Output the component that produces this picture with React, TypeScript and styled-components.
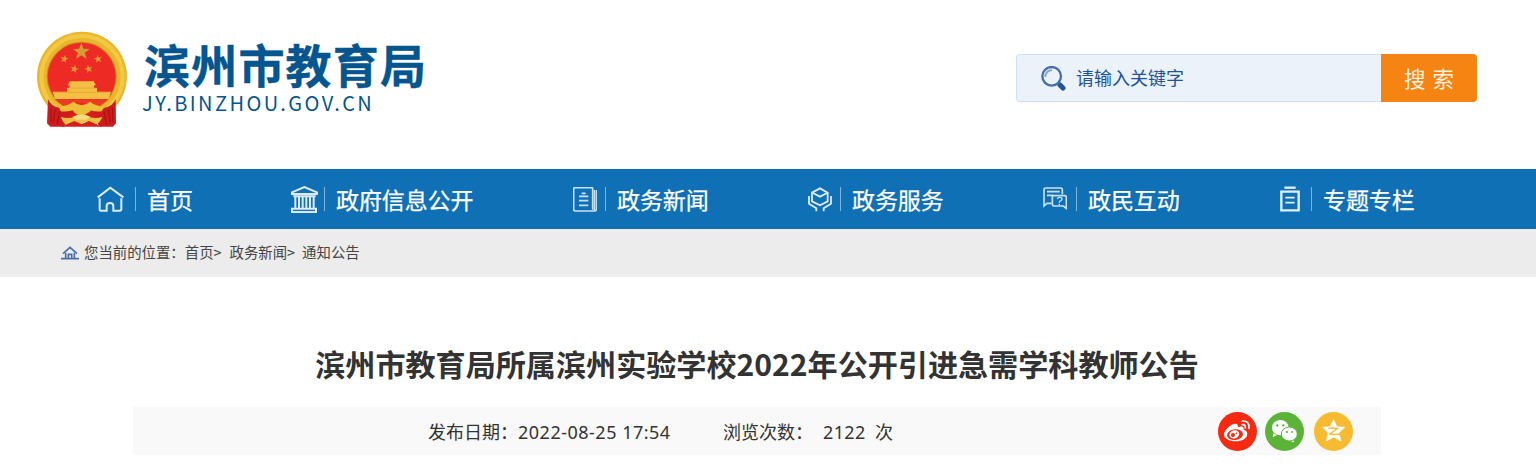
import * as React from 'react'
import styled, { createGlobalStyle } from 'styled-components'

const GlobalStyle = createGlobalStyle`
    body {
        margin: 0;
        background: #fff;
        color: #333;
        font-family: 'Noto Sans CJK SC', 'Noto Sans', sans-serif;
    }
`

const Page = styled.div`
    width: 1536px;
    height: 472px;
    overflow: hidden;
`

const Header = styled.header`
    height: 169px;
    box-sizing: border-box;
    padding: 30px 59px 0 36px;
    display: flex;
    justify-content: space-between;
    align-items: flex-start;
`

const Brand = styled.div`
    display: flex;
    gap: 14px;
`

const BrandText = styled.div`
    padding-top: 8px;
    color: #05558f;
    white-space: nowrap;
`

const BrandName = styled.div`
    padding-left: 2px;
    font-size: 46px;
    font-weight: 700;
    line-height: 50px;
    letter-spacing: 1.2px;
    -webkit-text-stroke: 0.4px #05558f;
`

const BrandDomain = styled.div`
    padding-top: 2px;
    font-size: 20px;
    font-weight: 400;
    line-height: 26px;
    letter-spacing: 2.45px;
`

const SearchForm = styled.div`
    margin-top: 24px;
    display: flex;
    width: 461px;
    height: 48px;
`

const SearchField = styled.label`
    flex: 1;
    box-sizing: border-box;
    display: flex;
    align-items: center;
    gap: 10px;
    padding-left: 24px;
    border: 1px solid #cce0fc;
    border-right: 0;
    border-radius: 4px 0 0 4px;
    background: #ebf2fa;
`

const SearchInput = styled.input`
    width: 280px;
    padding: 0 0 2px;
    border: 0;
    outline: 0;
    background: transparent;
    font-family: inherit;
    font-size: 18px;
    color: #20539a;
    &::placeholder {
        color: #20539a;
        opacity: 1;
    }
`

const SearchButton = styled.button`
    width: 96px;
    padding: 0 0 2px;
    border: 0;
    border-radius: 0 4px 4px 0;
    background: #f68412;
    color: #fff0df;
    font-family: inherit;
    font-size: 21.5px;
    word-spacing: 2px;
`

const Nav = styled.nav`
    height: 60px;
    padding-left: 97px;
    display: grid;
    grid-template-columns: 194px 282px 235px 235px 237px 1fr;
    align-items: center;
    background: #1070b5;
`

const NavItem = styled.a`
    height: 60px;
    display: flex;
    align-items: center;
    color: #fff;
    font-size: 23px;
    line-height: 60px;
    letter-spacing: -0.1px;
    white-space: nowrap;
`

const NavIcon = styled.span<{ $slot: number }>`
    width: ${props => props.$slot}px;
    height: 24px;
    box-sizing: border-box;
    flex: none;
    display: flex;
    align-items: center;
    margin-right: 11px;
    border-right: 1px solid #7fb4dd;
`

const NavLabel = styled.span`
    height: 60px;
    -webkit-text-stroke: 0.25px #fff;
`

const Crumbs = styled.div`
    height: 48px;
    padding-left: 61px;
    display: flex;
    align-items: center;
    background: #ececec;
    color: #444;
    font-size: 14.4px;
    white-space: pre;
`

const CrumbText = styled.span<{ $before?: number }>`
    margin-left: ${props => props.$before || 0}px;
    padding-bottom: 3px;
`

const Article = styled.main`
    padding: 63px 155px 0 133px;
`

const Title = styled.h1`
    margin: 0;
    height: 67px;
    line-height: 46px;
    font-size: 30.1px;
    font-weight: 700;
    text-align: center;
    white-space: nowrap;
`

const MetaBar = styled.div`
    height: 48px;
    display: flex;
    align-items: center;
    padding: 0 28px 0 295px;
    background: #f9f9f9;
    font-size: 18px;
    white-space: pre;
`

const MetaText = styled.span<{ $width: number }>`
    width: ${props => props.$width}px;
`

const Digits = styled.span<{ $spacing: number }>`
    font-family: 'Noto Sans', sans-serif;
    letter-spacing: ${props => props.$spacing}px;
`

const ShareList = styled.div`
    margin-left: auto;
    display: grid;
    grid-template-columns: 47px 49px 39px;
`

const STAR = 'M0-10 2.4-3.2 9.5-3.1 3.8 1.2 5.9 8.1 0 4-5.9 8.1-3.8 1.2-9.5-3.1-2.4-3.2Z'

const Emblem = () => (
    <svg width="92" height="98" viewBox="48 30 276 294">
        <ellipse cx="186" cy="170" rx="135" ry="135" fill="#eab62c"/>
        <ellipse cx="186" cy="170" rx="122" ry="122" fill="none" stroke="#f3c944" strokeWidth="12"/>
        <circle cx="185" cy="170" r="105" fill="#c98b22"/>
        <circle cx="185" cy="170" r="102" fill="#ed2b24"/>
        <g fill="#d99a35">
            <path d={STAR} transform="translate(184 95) scale(2.7)"/>
            <path d={STAR} transform="translate(133 117) scale(1.3) rotate(12)"/>
            <path d={STAR} transform="translate(234 117) scale(1.3) rotate(-12)"/>
            <path d={STAR} transform="translate(163 147) scale(1.3) rotate(14)"/>
            <path d={STAR} transform="translate(206 147) scale(1.3) rotate(-14)"/>
        </g>
        <path d="M150 184h71l7 12h-6v8h9v11h42l-7 22H105l-7-22h43v-11h8v-8h-6Z" fill="#f4c044"/>
        <path d="M142 204h88M104 217h162" stroke="#e39a2b" strokeWidth="2"/>
        <path d="M103 238h164l-28 20q-55-21-108 0Z" fill="#ed3b22"/>
        <path d="M84 237q8 23 37 27l31-2 12 18-33 40H91l-10-10Z" fill="#cf1b1c"/>
        <path d="M287 237q-8 23-37 27l-31-2-12 18 33 40h39l9-10Z" fill="#cf1b1c"/>
        <path d="M93 263v45M105 268l-5 40M119 275l-8 39M278 263v45M266 268l5 40M252 275l8 39" stroke="#a81416" strokeWidth="4"/>
        <path d="M140 286 185 270 232 286 226 300H146Z" fill="#d91e1c"/>
        <path d="M116 259q30-2 44-14 25 21 50 0 17 14 45 14l-10 15q-17 2-35-3-9 15-26 15-18 0-25-15-20 5-37 3Z" fill="#efbf37"/>
        <path d="M123 291q24 6 38 0 22-15 46 0 20 6 40 0-7 18-22 25-19 0-27-12-15 13-30 0-9 12-28 12-12-8-17-25Z" fill="#ecc045"/>
        <path d="M158 290q26-13 53 0l-14 11q-13-5-26 0Z" fill="#f6dc7c"/>
        <path d="M123 320l40-17 22 9 22-9 40 17Z" fill="#d91e1c"/>
    </svg>
)

const SearchIcon = () => (
    <svg width="25" height="25" viewBox="0 0 75 75" fill="none">
        <path d="M49 50 56 56" stroke="#7193bf" strokeWidth="8"/>
        <path d="M57 57 66 66" stroke="#245498" strokeWidth="15" strokeLinecap="round"/>
        <circle cx="32" cy="31" r="28" stroke="#4470a8" strokeWidth="7"/>
        <path d="M13 33Q14 14 33 12" stroke="#86a6cc" strokeWidth="6"/>
    </svg>
)

const HomeIcon = () => (
    <svg width="27" height="26" viewBox="0 0 81 78" fill="none" stroke="#dcebf7" strokeWidth="6">
        <path d="M2 34 40 5 79 34"/>
        <path d="M8 37v34q0 3 4 3h17V60q0-9 10-9t10 9v14h19q5 0 5-4V37"/>
    </svg>
)

const GovIcon = () => (
    <svg width="27" height="27" viewBox="0 0 81 81" fill="none" stroke="#dcebf7" strokeWidth="6">
        <path d="M3 24v-5L40 3l38 16v5Z"/>
        <path d="M7 31h67M13 28v40M24 31v36M35 31v36M46 31v36M57 31v36M68 28v40"/>
        <path d="M6 68h69v10H3V68Z"/>
    </svg>
)

const NewsIcon = () => (
    <svg width="24" height="25" viewBox="0 0 72 75" fill="none" stroke="#c9e0f2" strokeWidth="5">
        <path d="M59 68V5q0-3-4-3H6Q2 2 2 6v61q0 5 5 5h57q6 0 6-5V9"/>
        <path d="M64 9v61" strokeWidth="4"/>
        <path d="M26 19h12M18 28h28M18 41h28M18 55h28"/>
    </svg>
)

const ServiceIcon = () => (
    <svg width="24" height="25" viewBox="0 0 72 75" fill="none" stroke="#dcebf7" strokeWidth="5.5">
        <path d="M36 4 59 17v26L36 55 12 43V17Z"/>
        <path d="M15 18 36 29 57 18"/>
        <path d="M3 27v23l22 14v9M69 27v23L47 64v9"/>
    </svg>
)

const ChatIcon = () => (
    <svg width="24" height="24" viewBox="0 0 72 72" fill="none" stroke="#c9e0f2" strokeWidth="5">
        <path d="M58 22V8q0-5-5-5H8Q3 3 3 8v49l9-8h14"/>
        <path d="M12 14h38M12 25h20"/>
        <path d="M31 26h34q5 0 5 5v33l-9-7H34q-6 0-6-5V31q0-5 3-5Z"/>
        <path d="M43 36q1-5 7-5 7 0 7 5 0 4-5 6-3 1-3 5m0 3v4" strokeWidth="4"/>
    </svg>
)

const TopicIcon = () => (
    <svg width="20" height="26" viewBox="0 0 60 78" fill="none" stroke="#e3eff9" strokeWidth="7">
        <path d="M13 5h34"/>
        <path d="M4 17h52v56H4Z"/>
        <path d="M16 35h28M16 50h28" strokeWidth="5"/>
    </svg>
)

const CrumbHomeIcon = () => (
    <svg width="18" height="14" viewBox="0 0 54 42" fill="none" stroke="#4a6fa6" strokeWidth="5">
        <path d="M6 23 27 4 48 23"/>
        <path d="M14 20v18M40 20v18M0 38h54"/>
        <path d="M22 37V25h10v12"/>
    </svg>
)

const WeiboIcon = () => (
    <svg width="39" height="39" viewBox="0 0 117 117">
        <circle cx="58.5" cy="58.5" r="58.5" fill="#f52a10"/>
        <path d="M18 67c0-13 26-36 38-31 5 2 4 8 3 10 9-4 20-4 18 7 5 1 11 5 11 13 0 14-17 22-35 22-20 0-35-8-35-21Z" fill="#fff"/>
        <ellipse cx="51" cy="68" rx="24" ry="16" transform="rotate(-6 51 68)" fill="#f52a10"/>
        <ellipse cx="49" cy="67" rx="15" ry="12" transform="rotate(-18 49 67)" fill="#fff"/>
        <circle cx="45" cy="69" r="6" fill="#f52a10"/>
        <circle cx="55" cy="64" r="2.5" fill="#f52a10"/>
        <path d="M73 27q22-1 20 22M73 38q10-1 9 10" fill="none" stroke="#fff" strokeWidth="5" strokeLinecap="round"/>
    </svg>
)

const WechatIcon = () => (
    <svg width="39" height="39" viewBox="0 0 117 117">
        <circle cx="58.5" cy="58.5" r="58.5" fill="#5bb438"/>
        <path d="M25 64 23 76 36 69Z" fill="#fff"/>
        <ellipse cx="46" cy="47" rx="25" ry="23" fill="#fff"/>
        <path d="M84 81 87 91 73 86Z" fill="#fff"/>
        <ellipse cx="73" cy="66" rx="24" ry="21" fill="#fff" stroke="#5bb438" strokeWidth="3"/>
        <g fill="#5bb438">
            <circle cx="37" cy="40" r="3.5"/>
            <circle cx="55" cy="40" r="3.5"/>
            <circle cx="66" cy="60" r="3"/>
            <circle cx="81" cy="60" r="3"/>
        </g>
    </svg>
)

const QzoneIcon = () => (
    <svg width="39" height="39" viewBox="0 0 117 117">
        <circle cx="58.5" cy="58.5" r="58.5" fill="#f7bb31"/>
        <path d="M59 23 68 44 92 46 74 63 81 87 59 75 37 87 43 63 26 46 49 44Z" fill="#fff" stroke="#fff" strokeWidth="2" strokeLinejoin="round"/>
        <path d="M43 49q15-2 28 0L48 66q13 2 31 0" fill="none" stroke="#f7bb31" strokeWidth="4"/>
    </svg>
)

const NAV_ITEMS = [
    { label: '首页', slot: 39, icon: <HomeIcon/> },
    { label: '政府信息公开', slot: 34, icon: <GovIcon/> },
    { label: '政务新闻', slot: 33, icon: <NewsIcon/> },
    { label: '政务服务', slot: 33, icon: <ServiceIcon/> },
    { label: '政民互动', slot: 34, icon: <ChatIcon/> },
    { label: '专题专栏', slot: 32, icon: <TopicIcon/> },
]

export default function App() {
    return (
        <Page>
            <GlobalStyle/>
            <Header>
                <Brand>
                    <Emblem/>
                    <BrandText>
                        <BrandName>滨州市教育局</BrandName>
                        <BrandDomain>JY.BINZHOU.GOV.CN</BrandDomain>
                    </BrandText>
                </Brand>
                <SearchForm>
                    <SearchField>
                        <SearchIcon/>
                        <SearchInput placeholder="请输入关键字"/>
                    </SearchField>
                    <SearchButton>搜 索</SearchButton>
                </SearchForm>
            </Header>
            <Nav>
                {NAV_ITEMS.map(item => (
                    <NavItem key={item.label}>
                        <NavIcon $slot={item.slot}>{item.icon}</NavIcon>
                        <NavLabel>{item.label}</NavLabel>
                    </NavItem>
                ))}
            </Nav>
            <Crumbs>
                <CrumbHomeIcon/>
                <CrumbText $before={5}>您当前的位置：</CrumbText>
                <CrumbText>首页&gt;</CrumbText>
                <CrumbText $before={8}>政务新闻&gt;</CrumbText>
                <CrumbText $before={7}>通知公告</CrumbText>
            </Crumbs>
            <Article>
                <Title>滨州市教育局所属滨州实验学校2022年公开引进急需学科教师公告</Title>
                <MetaBar>
                    <MetaText $width={295}>发布日期：<Digits $spacing={0.5}>2022-08-25 17:54</Digits></MetaText>
                    <MetaText $width={100}>浏览次数：</MetaText>
                    <MetaText $width={52}><Digits $spacing={0.35}>2122</Digits></MetaText>
                    <span>次</span>
                    <ShareList>
                        <WeiboIcon/>
                        <WechatIcon/>
                        <QzoneIcon/>
                    </ShareList>
                </MetaBar>
            </Article>
        </Page>
    )
}
